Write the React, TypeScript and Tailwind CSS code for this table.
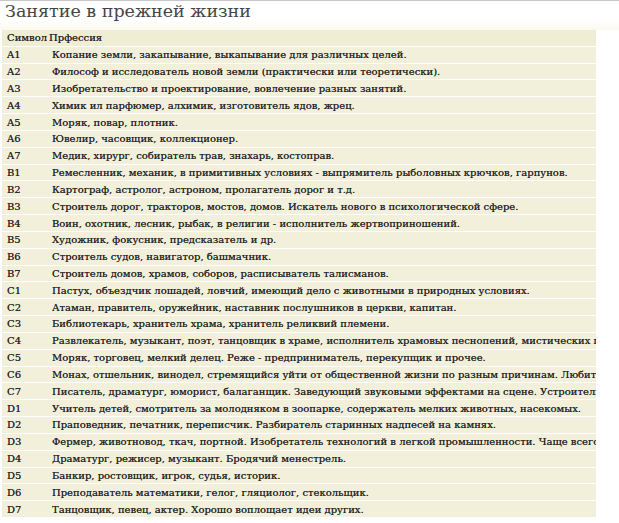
import React from "react";

const rows: [string, string][] = [
  ["A1", "Копание земли, закапывание, выкапывание для различных целей."],
  ["A2", "Философ и исследователь новой земли (практически или теоретически)."],
  ["A3", "Изобретательство и проектирование, вовлечение разных занятий."],
  ["A4", "Химик ил парфюмер, алхимик, изготовитель ядов, жрец."],
  ["A5", "Моряк, повар, плотник."],
  ["A6", "Ювелир, часовщик, коллекционер."],
  ["A7", "Медик, хирург, собиратель трав, знахарь, костоправ."],
  ["B1", "Ремесленник, механик, в примитивных условиях - выпрямитель рыболовных крючков, гарпунов."],
  ["B2", "Картограф, астролог, астроном, пролагатель дорог и т.д."],
  ["B3", "Строитель дорог, тракторов, мостов, домов. Искатель нового в психологической сфере."],
  ["B4", "Воин, охотник, лесник, рыбак, в религии - исполнитель жертвоприношений."],
  ["B5", "Художник, фокусник, предсказатель и др."],
  ["B6", "Строитель судов, навигатор, башмачник."],
  ["B7", "Строитель домов, храмов, соборов, расписыватель талисманов."],
  ["C1", "Пастух, объездчик лошадей, ловчий, имеющий дело с животными в природных условиях."],
  ["C2", "Атаман, правитель, оружейник, наставник послушников в церкви, капитан."],
  ["C3", "Библиотекарь, хранитель храма, хранитель реликвий племени."],
  ["C4", "Развлекатель, музыкант, поэт, танцовщик в храме, исполнитель храмовых песнопений, мистических пье"],
  ["C5", "Моряк, торговец, мелкий делец. Реже - предприниматель, перекупщик и прочее."],
  ["C6", "Монах, отшельник, винодел, стремящийся уйти от общественной жизни по разным причинам. Любител"],
  ["C7", "Писатель, драматург, юморист, балаганщик. Заведующий звуковыми эффектами на сцене. Устроитель"],
  ["D1", "Учитель детей, смотритель за молодняком в зоопарке, содержатель мелких животных, насекомых."],
  ["D2", "Праповедник, печатник, переписчик. Разбиратель старинных надпесей на камнях."],
  ["D3", "Фермер, животновод, ткач, портной. Изобретатель технологий в легкой промышленности. Чаще всего ."],
  ["D4", "Драматург, режисер, музыкант. Бродячий менестрель."],
  ["D5", "Банкир, ростовщик, игрок, судья, историк."],
  ["D6", "Преподаватель математики, гелог, гляциолог, стекольщик."],
  ["D7", "Танцовщик, певец, актер. Хорошо воплощает идеи других."],
];

export default function App() {
  return (
    <div className="w-[619px] h-[523px] bg-white border-t border-[#c8c8c8] overflow-hidden font-['DejaVu_Serif',serif]">
      <h1 className="pl-[5px] pt-[1px] h-[29px] text-[17.5px] leading-[19px] text-[#454545] font-['DejaVu_Serif',serif] bg-gradient-to-b from-white from-60% to-[#fbfaf0]">
        Занятие в прежней жизни
      </h1>
      <div className="ml-[2px] w-[594px] flex flex-col gap-[1px] text-[10px] text-[#262626] font-['DejaVu_Serif',serif] [text-shadow:0_0_0.5px_#444]">
        <div className="h-[15.83px] flex items-center bg-[#efeed5] pl-[5px] whitespace-nowrap overflow-hidden">
          <span>Символ</span>
          <span className="ml-[2px]">Прфессия</span>
        </div>
        {rows.map(([s, t]) => (
          <div
            key={s}
            className="h-[15.83px] flex items-center bg-[#f2f0da] whitespace-nowrap overflow-hidden"
          >
            <span className="w-[50px] shrink-0 pl-[5px]">{s}</span>
            <span className="overflow-hidden">{t}</span>
          </div>
        ))}
      </div>
    </div>
  );
}
